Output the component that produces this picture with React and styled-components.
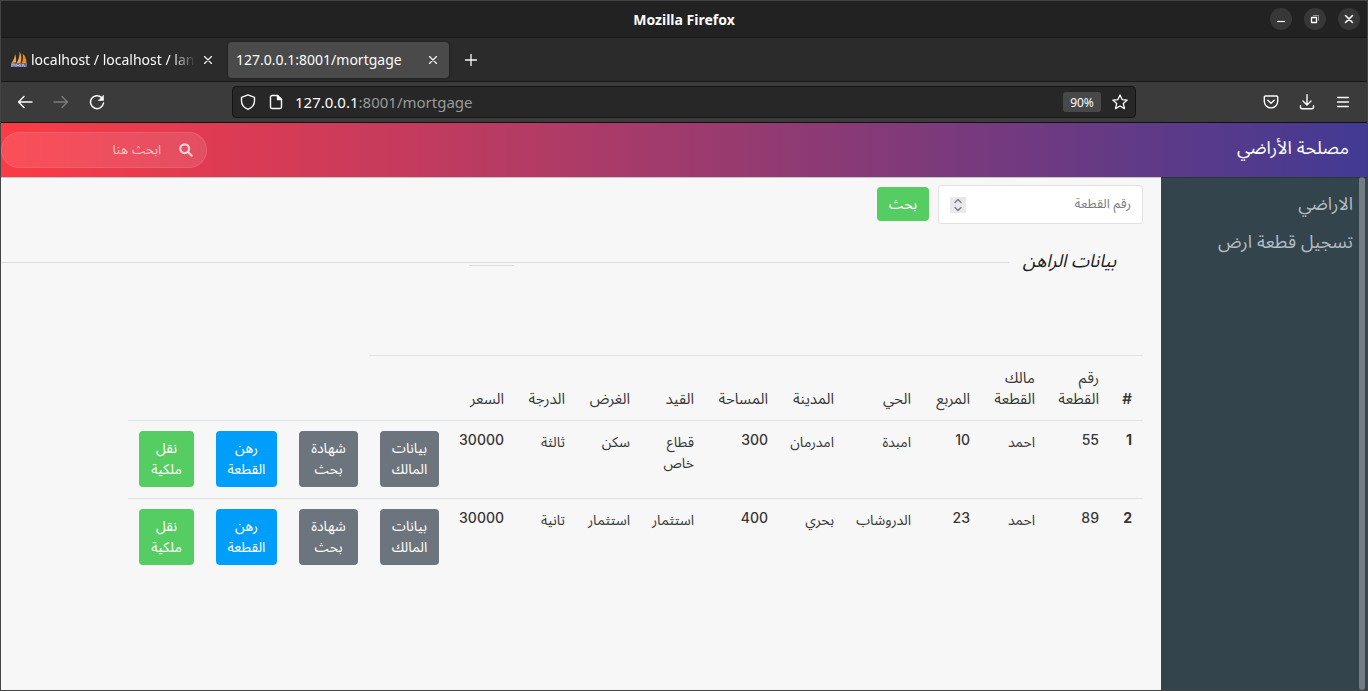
import React from "react";
import styled, { createGlobalStyle } from "styled-components";

const Global = createGlobalStyle`
  *, *::before, *::after { box-sizing: border-box; }
  html, body, #root { height: 100%; }
  body { margin: 0; background: #2b2b2b; overflow: hidden; }
  button, input { font: inherit; }
`;

const chromeFont = `"Noto Sans", "Open Sans", sans-serif`;
const pageFont = `Inter, "Noto Sans Arabic", "Noto Naskh Arabic", "DejaVu Sans", sans-serif`;

const Window = styled.div`
  display: flex;
  flex-direction: column;
  height: 100vh;
  border: 1px solid #444;
  font-family: ${chromeFont};
  color: #fbfbfe;
`;

const TitleBar = styled.header`
  display: grid;
  grid-template-columns: 1fr auto 1fr;
  align-items: center;
  height: 37px;
  flex: none;
  padding: 0 7px;
  background: #222;
  border-bottom: 1px solid #181818;
`;
const Title = styled.h1`
  grid-column: 2;
  margin: 0;
  font-size: 14px;
  font-weight: 700;
`;
const WindowButtons = styled.div`
  display: flex;
  justify-content: flex-end;
  gap: 12px;
`;
const RoundButton = styled.button`
  display: grid;
  place-items: center;
  width: 22px;
  height: 22px;
  padding: 0;
  border: 0;
  border-radius: 50%;
  background: #373737;
  color: #fff;
`;

const TabStrip = styled.nav`
  display: flex;
  align-items: center;
  height: 44px;
  flex: none;
  padding: 0 3px;
  gap: 6px;
  background: #2b2b2b;
  border-bottom: 1px solid #191919;
`;
const Tab = styled.div`
  display: flex;
  align-items: center;
  width: ${(p) => (p.$active ? 221 : 218)}px;
  height: 36px;
  padding: 0 ${(p) => (p.$active ? 7 : 5)}px 0 ${(p) => (p.$active ? 8 : 6)}px;
  gap: ${(p) => (p.$active ? 4 : 3)}px;
  border-radius: 4px;
  background: ${(p) => (p.$active ? "#4a4a4a" : "transparent")};
  font-size: 14px;
  line-height: 20px;
  box-shadow: ${(p) => (p.$active ? "0 0 3px rgba(0,0,0,.4)" : "none")};
`;
const TabTitle = styled.span`
  flex: 1;
  min-width: 0;
  padding-top: 1px;
  overflow: hidden;
  white-space: nowrap;
  mask-image: ${(p) => (p.$fade ? "linear-gradient(to right, #000 85%, transparent)" : "none")};
`;
const IconButton = styled.button`
  display: grid;
  place-items: center;
  width: ${(p) => p.$size || 18}px;
  height: ${(p) => p.$size || 18}px;
  flex: none;
  padding: 0;
  border: 0;
  background: none;
  color: ${(p) => (p.disabled ? "#7d7d7d" : "#fbfbfe")};
`;

const Toolbar = styled.div`
  display: grid;
  grid-template-columns: 231px minmax(0, 904px) 1fr;
  align-items: center;
  height: 41px;
  flex: none;
  background: #3b3b3b;
  border-bottom: 1px solid #111;
`;
const NavButtons = styled.div`
  display: flex;
  gap: 18px;
  padding-left: 15px;
`;
const MenuButtons = styled.div`
  display: flex;
  justify-content: flex-end;
  gap: 18px;
  padding-right: 15px;
`;
const AddressBar = styled.div`
  display: flex;
  align-items: center;
  gap: 10px;
  height: 32px;
  padding: 0 6px;
  border: 1px solid #151515;
  border-radius: 4px;
  background: #272727;
`;
const Address = styled.span`
  flex: 1;
  font-size: 15px;
  color: #9a9a9a;
  b { font-weight: 400; color: #fbfbfe; }
`;
const Zoom = styled.button`
  height: 20px;
  width: 38px;
  padding: 0;
  border: 0;
  border-radius: 3px;
  background: #484848;
  color: #fbfbfe;
  font-size: 12px;
`;

const Page = styled.div`
  display: flex;
  flex-direction: column;
  flex: 1;
  min-height: 0;
  background: #f7f7f7;
  font-family: ${pageFont};
  color: #373737;
`;
const Banner = styled.header`
  position: relative;
  display: flex;
  align-items: center;
  justify-content: space-between;
  height: 54px;
  flex: none;
  padding-right: 18px;
  background: linear-gradient(to left, #423a94, #fb3b46);
  box-shadow: 0 1px 0 rgba(0,0,0,.2);
`;
const Brand = styled.a`
  padding-bottom: 4px;
  color: #fff;
  font-size: 18px;
  line-height: 24px;
  text-decoration: none;
`;
const SearchPill = styled.label`
  display: flex;
  align-items: center;
  gap: 18px;
  width: 206px;
  height: 36px;
  padding: 0 13px;
  border: 1px solid rgba(255,255,255,.1);
  border-radius: 18px;
  background: rgba(255,255,255,.1);
  color: rgba(255,255,255,.75);
`;
const SearchInput = styled.input`
  flex: 1;
  min-width: 0;
  padding: 0 0 2px;
  border: 0;
  background: none;
  color: #fff;
  font-size: 13px;
  &::placeholder { color: rgba(255,255,255,.65); opacity: 1; }
`;
const Columns = styled.div`
  display: flex;
  flex: 1;
  min-height: 0;
`;
const Sidebar = styled.aside`
  display: flex;
  justify-content: space-between;
  width: 206px;
  flex: none;
  background: #33444c;
`;
const ScrollThumb = styled.div`
  width: 6px;
  margin-right: 2px;
  border-radius: 3px;
  background: #737c82;
`;
const SideNav = styled.nav`
  display: flex;
  flex-direction: column;
  flex: 1;
  padding: 8px 6px;
`;
const SideLink = styled.a`
  color: #b3bcc4;
  font-size: 18px;
  line-height: 38px;
  text-decoration: none;
`;
const Main = styled.main`
  flex: 1;
  min-width: 0;
  overflow: hidden;
`;
const PlotSearch = styled.form`
  display: flex;
  align-items: flex-start;
  gap: 9px;
  padding: 8px 18px 0 0;
`;
const NumberField = styled.div`
  display: flex;
  align-items: center;
  width: 205px;
  height: 39px;
  padding: 0 11px;
  border: 1px solid #e1e2e4;
  border-radius: 3px;
  background: #fff;
`;
const NumberInput = styled.input`
  flex: 1;
  min-width: 0;
  padding: 0 0 4px;
  border: 0;
  background: none;
  font-size: 13px;
  appearance: textfield;
  &::-webkit-inner-spin-button { appearance: none; margin: 0; }
  &::placeholder { color: #767d84; opacity: 1; }
`;
const Stepper = styled.button`
  display: grid;
  place-items: center;
  width: 16px;
  height: 16px;
  padding: 0;
  border: 0;
  background: #e9e9ed;
  color: #777780;
`;
const colors = { green: "#56cd63", blue: "#009efb", gray: "#6c757d" };
const Button = styled.button`
  padding: 6px 12px;
  border: 0;
  border-radius: 4px;
  background: ${(p) => colors[p.$tone]};
  color: #fff;
  font-size: 14px;
  line-height: 22px;
`;
const SearchButton = styled(Button)`
  margin-top: 2px;
`;
const SectionHead = styled.div`
  position: relative;
  display: flex;
  align-items: center;
  gap: 14px;
  height: 40px;
  margin-top: 18px;
  padding-right: 45px;
`;
const SectionTitle = styled.h2`
  margin: 0;
  padding-bottom: 2px;
  color: #212121;
  font-size: 18px;
  font-style: italic;
  font-weight: 400;
  line-height: 24px;
`;
const Rule = styled.hr`
  flex: 1;
  margin: 0;
  border: 0;
  border-top: 1px solid #dcdcdc;
`;
const ShortRule = styled.span`
  position: absolute;
  top: 23px;
  left: 468px;
  width: 45px;
  height: 1px;
  background: #dcdcdc;
`;
const Table = styled.table`
  table-layout: fixed;
  width: 1015px;
  margin: 73px 18px 0 0;
  border-collapse: collapse;
  font-size: 14px;
  line-height: 21px;
  text-align: right;
`;
const HeadCell = styled.th`
  height: 65px;
  padding: 11px;
  border-top: 1px solid #dee2e6;
  font-size: 15px;
  font-weight: ${(p) => (p.$strong ? 600 : 400)};
  vertical-align: bottom;
  white-space: pre;
`;
const Cell = styled.td`
  height: 78px;
  padding: 10px 11px;
  border-top: 1px solid #dee2e6;
  font-weight: ${(p) => (p.$strong ? 700 : p.$numeric ? 500 : 400)};
  line-height: ${(p) => (p.$numeric ? 17 : 21)}px;
  vertical-align: top;
  white-space: pre;
`;
const RowButton = styled(Button)`
  width: 100%;
  padding: 6px 4px 8px;
  line-height: 21px;
  white-space: pre;
`;

const Icon = ({ size = 16, w = 1.4, children }) => (
  <svg width={size} height={size} viewBox="0 0 16 16" fill="none" stroke="currentColor" strokeWidth={w} strokeLinecap="round" strokeLinejoin="round" aria-hidden="true">
    {children}
  </svg>
);
const Cross = () => <Icon size={16} w={1.1}><path d="M4.5 4.5l7 7M11.5 4.5l-7 7" /></Icon>;

const widths = [33, 64, 65, 59, 77, 66, 74, 64, 65, 61, 65, 81, 81, 83, 77];
const heads = ["#", "رقم\nالقطعة", "مالك\nالقطعة", "المربع", "الحي", "المدينة", "المساحة", "القيد", "الغرض", "الدرجة", "السعر", ""];
const rows = [
  ["1", "55", "احمد", "10", "امبدة", "امدرمان", "300", "قطاع\nخاص", "سكن", "ثالثة", "30000"],
  ["2", "89", "احمد", "23", "الدروشاب", "بحري", "400", "استثمار", "استثمار", "تانية", "30000"],
];
const actions = [
  ["gray", "بيانات\nالمالك"],
  ["gray", "شهادة\nبحث"],
  ["blue", "رهن\nالقطعة"],
  ["green", "نقل\nملكية"],
];
const isNumeric = (text) => /^\d+$/.test(text);

export default function App() {
  return (
    <Window>
      <Global />
      <TitleBar>
        <Title>Mozilla Firefox</Title>
        <WindowButtons>
          <RoundButton aria-label="Minimize"><Icon w={1.2}><path d="M4 10.5h8" strokeLinecap="butt" /></Icon></RoundButton>
          <RoundButton aria-label="Restore"><Icon w={1.3}><path d="M4.5 6.5h5v5h-5z" /><path d="M6.5 4.5h5v5" stroke="#999" strokeWidth="1" /></Icon></RoundButton>
          <RoundButton aria-label="Close"><Icon w={1.6}><path d="M4.5 4.5l7 7M11.5 4.5l-7 7" /></Icon></RoundButton>
        </WindowButtons>
      </TitleBar>
      <TabStrip>
        <Tab>
          <svg width="18" height="18" viewBox="0 0 18 18" aria-hidden="true">
            <path d="M5 3C5 6 3.500 9 1.500 12L6 11.500C6.300 8 6 5 5 3z" fill="#f4a340" />
            <path d="M9.500 .5C11.800 4 11.800 8 10.500 12L6.500 12C8.800 8 9.800 5 9.500 .5z" fill="#f7a13a" />
            <path d="M12.500 2.500C15.500 5 16.500 9 16.500 12L11.800 12C13.200 9 13.300 6 12.500 2.500z" fill="#f7870f" />
            <path d="M1 12h16v4H1z" fill="#6a6d9c" />
            <path d="M2 16v-3h2v2M6 16v-3l2 2 2-2v3M12 16l1-3 2 3" fill="none" stroke="#c4c6df" strokeWidth=".8" />
          </svg>
          <TabTitle $fade>localhost / localhost / lan</TabTitle>
          <IconButton aria-label="Close tab"><Cross /></IconButton>
        </Tab>
        <Tab $active>
          <TabTitle>127.0.0.1:8001/mortgage</TabTitle>
          <IconButton aria-label="Close tab"><Cross /></IconButton>
        </Tab>
        <IconButton $size={32} aria-label="New tab"><Icon w={1.3}><path d="M8 2.500v11M2.500 8h11" /></Icon></IconButton>
      </TabStrip>
      <Toolbar>
        <NavButtons>
          <IconButton aria-label="Back"><Icon><path d="M15 8H1.500M7 2.500L1.500 8 7 13.500" /></Icon></IconButton>
          <IconButton aria-label="Forward" disabled><Icon><path d="M1 8h13.500M9 2.500L14.500 8 9 13.500" /></Icon></IconButton>
          <IconButton aria-label="Reload"><Icon w={1.5}><path d="M12.600 3.500A6.500 6.500 0 1 0 14.500 9" /><path d="M14.500 1.500v5h-5z" fill="currentColor" strokeWidth=".6" /></Icon></IconButton>
        </NavButtons>
        <AddressBar>
          <IconButton aria-label="Protection"><Icon><path d="M8 .8l6.500 2.500v3.500c0 3.700-2.500 7-6.500 8.500-4-1.500-6.500-4.800-6.500-8.500V3.300z" /></Icon></IconButton>
          <IconButton aria-label="Site information"><Icon><path d="M9.500 1.500H4A1.500 1.500 0 0 0 2.500 3v10A1.500 1.500 0 0 0 4 14.500h8a1.500 1.500 0 0 0 1.500-1.500V5.500z" /><path d="M9.500 1.500v4h4z" fill="currentColor" /></Icon></IconButton>
          <Address><b>127.0.0.1</b>:8001/mortgage</Address>
          <Zoom>90%</Zoom>
          <IconButton aria-label="Bookmark"><Icon w={1.300}><path d="M8 .9l2.100 4.700 5.100.5-3.900 3.400 1.200 5.100L8 12l-4.500 2.600 1.200-5.100L.8 6.100l5.100-.5z" /></Icon></IconButton>
        </AddressBar>
        <MenuButtons>
          <IconButton aria-label="Pocket"><Icon><path d="M2.500 2h11a1.200 1.200 0 0 1 1.200 1.200v4a6.700 6.700 0 0 1-13.400 0v-4A1.200 1.200 0 0 1 2.500 2z" /><path d="M4.800 6.300L8 9.300l3.200-3" /></Icon></IconButton>
          <IconButton aria-label="Downloads"><Icon><path d="M8 .8v10M4 7l4 4 4-4M1.500 11.800v1.500a1.500 1.500 0 0 0 1.500 1.500h10a1.500 1.500 0 0 0 1.500-1.500v-1.500" /></Icon></IconButton>
          <IconButton aria-label="Menu"><Icon w={1.300}><path d="M2.500 3.500h11M2.500 8h11M2.500 12.500h11" /></Icon></IconButton>
        </MenuButtons>
      </Toolbar>
      <Page dir="rtl" lang="ar">
        <Banner>
          <Brand href="#">مصلحة الأراضي</Brand>
          <SearchPill>
            <Icon size={14} w={2.500}><circle cx="6.500" cy="6.500" r="5" /><path d="M10.500 10.500l4 4" /></Icon>
            <SearchInput type="text" placeholder="ابحث هنا" />
          </SearchPill>
        </Banner>
        <Columns>
          <Sidebar>
            <ScrollThumb />
            <SideNav>
              <SideLink href="#">الاراضي</SideLink>
              <SideLink href="#">تسجيل قطعة ارض</SideLink>
            </SideNav>
          </Sidebar>
          <Main>
            <PlotSearch>
              <NumberField>
                <NumberInput type="number" placeholder="رقم القطعة" aria-label="رقم القطعة" />
                <Stepper type="button" aria-label="Step"><Icon w={1.300}><path d="M5 5.500l3-3 3 3M5 10.500l3 3 3-3" /></Icon></Stepper>
              </NumberField>
              <SearchButton type="button" $tone="green">بحث</SearchButton>
            </PlotSearch>
            <SectionHead>
              <SectionTitle>بيانات الراهن</SectionTitle>
              <Rule />
              <ShortRule />
            </SectionHead>
            <Table>
              <colgroup>{widths.map((w, i) => <col key={i} width={w} />)}</colgroup>
              <thead>
                <tr>{heads.map((h, i) => <HeadCell key={i} scope="col" $strong={i === 0}>{h}</HeadCell>)}</tr>
              </thead>
              <tbody>
                {rows.map((r) => (
                  <tr key={r[0]}>
                    {r.map((c, i) => <Cell key={i} as={i === 0 ? "th" : "td"} $strong={i === 0} $numeric={isNumeric(c)}>{c}</Cell>)}
                    {actions.map(([tone, label]) => (
                      <Cell key={label}><RowButton type="button" $tone={tone}>{label}</RowButton></Cell>
                    ))}
                  </tr>
                ))}
              </tbody>
            </Table>
          </Main>
        </Columns>
      </Page>
    </Window>
  );
}
